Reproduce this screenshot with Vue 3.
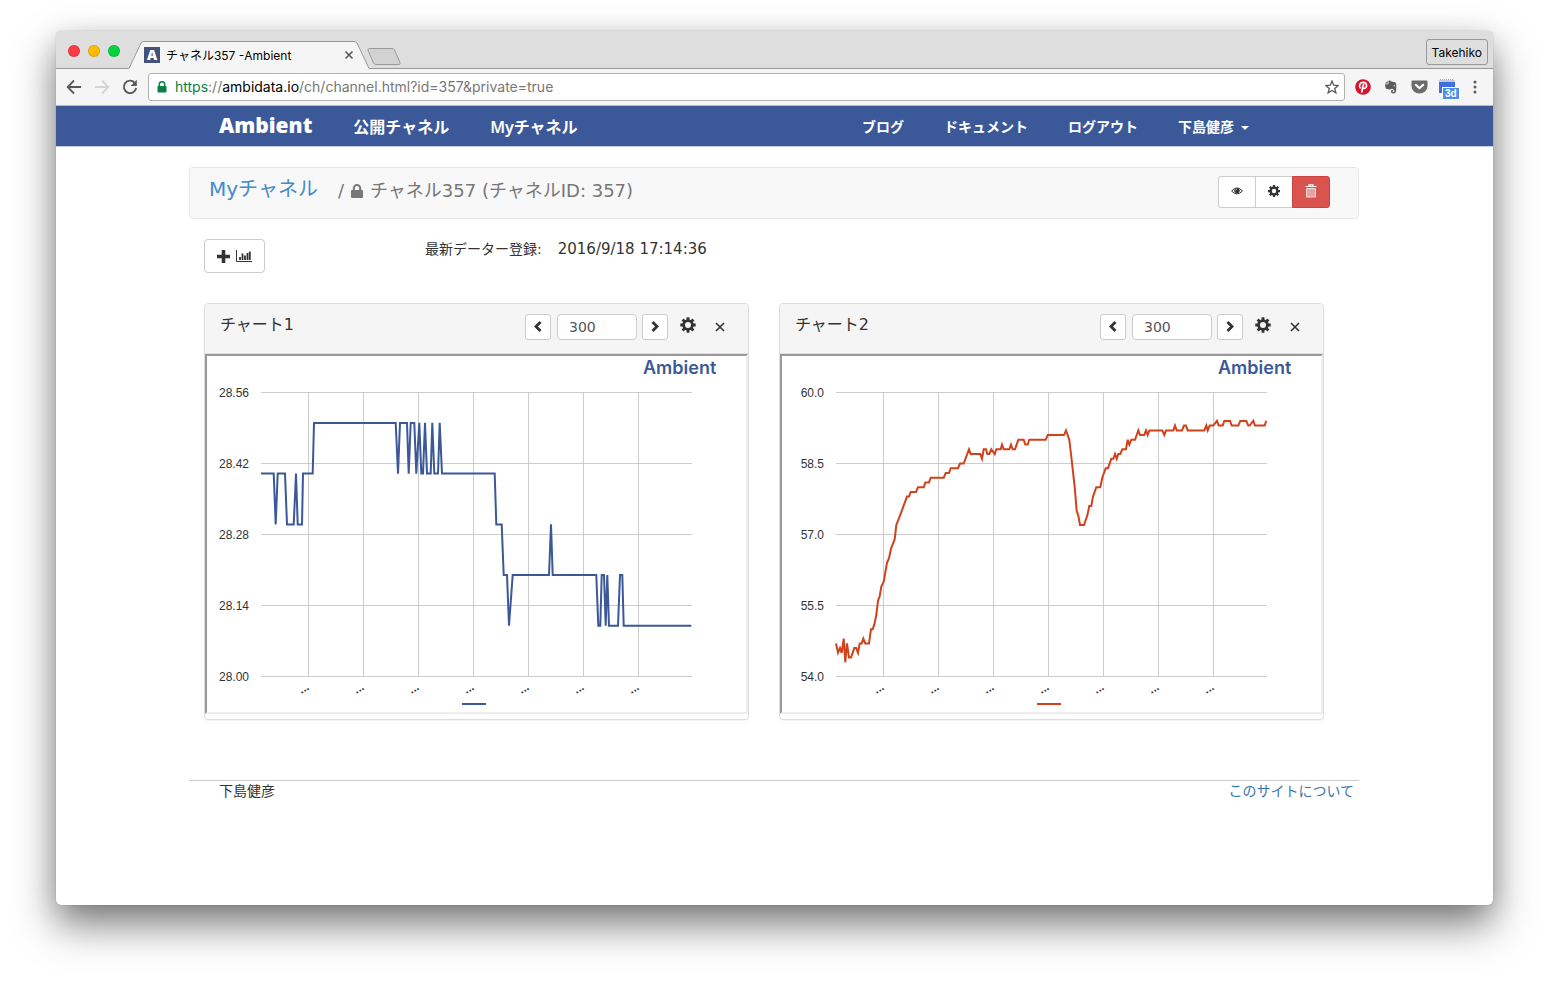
<script setup>
import { ref } from 'vue'

const T_START = 184
const T_SCALE = 3
const PLOT = { left: 54, right: 485, top: 36.5, step: 71 }
const gridX = [102, 157, 212, 267, 322, 377, 432]

const temperature = [
  [184, 28.4], [222, 28.4], [228, 28.3], [234, 28.4], [256, 28.4], [262, 28.3], [282, 28.3], [289, 28.4],
  [294, 28.3], [307, 28.3], [310, 28.4], [339, 28.4], [343, 28.5], [588, 28.5], [595, 28.4], [601, 28.5],
  [622, 28.5], [627, 28.4], [633, 28.5], [644, 28.5], [650, 28.4], [659, 28.5], [665, 28.4], [670, 28.4],
  [676, 28.5], [682, 28.4], [693, 28.4], [698, 28.5], [704, 28.4], [715, 28.4], [720, 28.5], [727, 28.4],
  [885, 28.4], [890, 28.3], [906, 28.3], [912, 28.2], [922, 28.2], [928, 28.1], [939, 28.2], [1048, 28.2],
  [1054, 28.3], [1059, 28.2], [1190, 28.2], [1196, 28.1], [1202, 28.1], [1206, 28.2], [1213, 28.2], [1218, 28.1],
  [1223, 28.2], [1228, 28.1], [1255, 28.1], [1261, 28.2], [1268, 28.2], [1272, 28.1], [1475, 28.1]
]

const humidity = [
  [184, 54.7], [190, 54.5], [196, 54.6], [201, 54.5], [207, 54.8], [212, 54.3], [217, 54.7], [223, 54.4],
  [229, 54.4], [239, 54.6], [245, 54.6], [250, 54.5], [255, 54.7], [261, 54.7], [266, 54.8], [272, 54.7],
  [283, 54.7], [289, 55.0], [294, 55.0], [299, 55.1], [305, 55.3], [310, 55.6], [315, 55.7], [320, 55.9],
  [327, 56.0], [332, 56.2], [337, 56.4], [343, 56.5], [349, 56.7], [360, 56.9], [365, 57.2], [376, 57.4],
  [397, 57.8], [403, 57.8], [408, 57.9], [424, 57.9], [430, 58.0], [447, 58.0], [452, 58.1], [463, 58.1],
  [468, 58.2], [507, 58.2], [513, 58.3], [523, 58.3], [528, 58.4], [550, 58.4], [556, 58.5], [567, 58.5],
  [583, 58.8], [588, 58.7], [617, 58.7], [622, 58.6], [627, 58.8], [634, 58.8], [638, 58.7], [644, 58.7],
  [650, 58.8], [660, 58.7], [665, 58.8], [678, 58.8], [682, 58.9], [687, 58.8], [704, 58.8], [709, 58.9],
  [714, 58.8], [721, 58.8], [731, 59.0], [747, 59.0], [752, 58.9], [759, 58.9], [764, 59.0], [813, 59.0],
  [819, 59.1], [868, 59.1], [874, 59.2], [879, 59.1], [884, 59.0], [889, 58.7], [900, 58.0], [906, 57.5],
  [911, 57.4], [916, 57.2], [928, 57.2], [938, 57.4], [944, 57.6], [950, 57.6], [955, 57.8], [965, 58.0],
  [977, 58.0], [983, 58.2], [993, 58.4], [1000, 58.4], [1010, 58.6], [1016, 58.6], [1021, 58.7], [1026, 58.6],
  [1031, 58.7], [1037, 58.7], [1043, 58.8], [1054, 58.8], [1059, 59.0], [1064, 58.9], [1070, 59.0], [1081, 59.0],
  [1091, 59.2], [1096, 59.1], [1109, 59.1], [1114, 59.2], [1119, 59.1], [1124, 59.2], [1163, 59.2], [1169, 59.1],
  [1174, 59.2], [1196, 59.2], [1201, 59.3], [1206, 59.2], [1222, 59.2], [1228, 59.3], [1234, 59.3], [1239, 59.2],
  [1289, 59.2], [1295, 59.3], [1299, 59.2], [1305, 59.3], [1316, 59.3], [1327, 59.4], [1332, 59.3], [1344, 59.3],
  [1349, 59.4], [1366, 59.4], [1371, 59.3], [1391, 59.3], [1397, 59.4], [1415, 59.4], [1421, 59.3], [1425, 59.3],
  [1436, 59.4], [1441, 59.3], [1470, 59.3], [1475, 59.4]
]

const charts = ref([
  { id: 'c1', title: 'チャート1', count: '300', color: '#3b5998', labels: ['28.56', '28.42', '28.28', '28.14', '28.00'], top: 28.56, bottom: 28.0, data: temperature },
  { id: 'c2', title: 'チャート2', count: '300', color: '#d0421b', labels: ['60.0', '58.5', '57.0', '55.5', '54.0'], top: 60, bottom: 54, data: humidity }
])

function polyline(c) {
  const height = PLOT.step * 4
  return c.data
    .map(([t, v]) => {
      const x = PLOT.left + (t - T_START) / T_SCALE
      const y = PLOT.top + ((c.top - v) / (c.top - c.bottom)) * height
      return x.toFixed(1) + ',' + y.toFixed(1)
    })
    .join(' ')
}

const url = ref('https://ambidata.io/ch/channel.html?id=357&private=true')
</script>

<template>
  <div class="desktop">
    <div class="window">
      <div class="titlebar">
        <div class="lights">
          <button class="light red" aria-label="閉じる"></button>
          <button class="light yellow" aria-label="しまう"></button>
          <button class="light green" aria-label="拡大"></button>
        </div>
        <div class="tab">
          <svg class="tab-shape" viewBox="0 0 242 28" preserveAspectRatio="none" aria-hidden="true">
            <path d="M0 27.500 L1 27.500 L13 2 Q14 .5 16 .5 L226 .5 Q228 .5 229 2 L241 27.500 L242 27.500 L242 29 L0 29Z" fill="#f5f5f5" />
            <path d="M0 27.500 L1 27.500 L13 2 Q14 .5 16 .5 L226 .5 Q228 .5 229 2 L241 27.500 L242 27.500" fill="none" stroke="#999" />
          </svg>
          <span class="favicon">A</span>
          <span class="tab-title">チャネル357 -Ambient</span>
          <button class="tab-close" aria-label="タブを閉じる">
            <svg width="10" height="10" viewBox="0 0 10 10"><path d="M1.500 1.500l7 7M8.500 1.500l-7 7" stroke="#555" stroke-width="1.500" /></svg>
          </button>
        </div>
        <button class="new-tab" aria-label="新しいタブ">
          <svg width="34" height="17" viewBox="0 0 34 17"><path d="M2.500 .5H25Q26.500 .5 27.500 2L33 14.500Q33.500 16.500 32 16.500H9Q7.500 16.500 6.500 15L1 2.500Q.5 .5 2.500 .5Z" fill="#d2d2d2" stroke="#9a9a9a" /></svg>
        </button>
        <button class="user">Takehiko</button>
      </div>

      <div class="toolbar">
        <button class="tool" aria-label="戻る">
          <svg width="16" height="16" viewBox="0 0 16 16"><path d="M15 8H2M8 1.500L1.700 8L8 14.500" fill="none" stroke="#5a5a5a" stroke-width="1.800" /></svg>
        </button>
        <button class="tool" aria-label="進む">
          <svg width="16" height="16" viewBox="0 0 16 16"><path d="M1 8H14M8 1.500L14.300 8L8 14.500" fill="none" stroke="#d4d4d4" stroke-width="1.800" /></svg>
        </button>
        <button class="tool" aria-label="再読み込み">
          <svg width="16" height="16" viewBox="0 0 16 16"><path d="M12.800 3.800A6.200 6.200 0 1 0 14.200 9" fill="none" stroke="#5a5a5a" stroke-width="1.900" /><path d="M14.800 .8V7H8.600Z" fill="#5a5a5a" /></svg>
        </button>
        <div class="address">
          <svg width="10" height="12" viewBox="0 0 10 12"><path d="M2.300 5.500V3.500a2.700 2.700 0 0 1 5.400 0v2" fill="none" stroke="#0b8043" stroke-width="1.500" /><rect x=".5" y="5" width="9" height="6.500" rx=".8" fill="#0b8043" /></svg>
          <a class="url" :href="url"><span class="secure">https</span>://<span class="host">ambidata.io</span>/ch/channel.html?id=357&amp;private=true</a>
          <button class="star" aria-label="ブックマーク">
            <svg width="14" height="14" viewBox="0 0 14 14"><path d="M7 1L8.700 5.200L13.200 5.500L9.700 8.400L10.900 12.900L7 10.400L3.100 12.900L4.300 8.400L.8 5.500L5.300 5.200Z" fill="none" stroke="#5a5a5a" stroke-width="1.300" /></svg>
          </button>
        </div>
        <div class="extensions">
          <button aria-label="Pinterest">
            <svg width="16" height="16" viewBox="0 0 16 16"><circle cx="8" cy="8" r="7.800" fill="#d8132c" /><path d="M5.200 8.900C3.500 6.300 5.200 3.300 8.300 3.300C12.700 3.300 12.300 9.500 9 9.500C7.700 9.500 7.500 8.600 7.500 8.600M8.500 5.500L6.700 13" fill="none" stroke="#fff" stroke-width="1.700" stroke-linecap="round" /></svg>
          </button>
          <button aria-label="Evernote">
            <svg width="14" height="14" viewBox="0 0 14 14"><path d="M4.500 .8C6 .3 7 .8 7.400 1.600L11 2.200C12.400 2.500 12.600 6 12.200 9.500C12 12.500 11 13.500 9.500 13.500C7.500 13.500 7 12.800 7 11.500C7 10.300 8 9.900 9 10.100V11.300C8.200 11.200 8.200 12 9 12.100C10 12.200 10.500 11.500 10.300 10.500C10 9.500 8.500 9.300 8 8.500C7 10 3 9.500 2 8.500C1.200 7.500 1 5.500 1.200 4.300H4.500Z" fill="#5c5c5c" /><path d="M1 3.400L3.700 .9V3.400Z" fill="#5c5c5c" /><circle cx="10.300" cy="5.800" r=".8" fill="#ddd" /></svg>
          </button>
          <button aria-label="Pocket">
            <svg width="17" height="14" viewBox="0 0 17 14"><path d="M1.500 .5H15.500Q16.500 .5 16.500 1.500V6A8 7.500 0 0 1 .5 6V1.500Q.5 .5 1.500 .5Z" fill="#6b6b6b" /><path d="M4.800 4.800L8.500 8.200L12.200 4.800" fill="none" stroke="#fff" stroke-width="2.200" stroke-linecap="round" stroke-linejoin="round" /></svg>
          </button>
          <button class="calendar" aria-label="カレンダー">
            <svg width="17" height="16" viewBox="0 0 17 16"><rect x="0" y="2" width="16" height="12" fill="#3f6fd8" /><rect x="0" y="1" width="16" height="2" fill="#c3cbdc" /><path d="M1 .5H15" stroke="#aaa" stroke-dasharray="1 1" /></svg>
            <span class="badge">3d</span>
          </button>
          <button aria-label="メニュー">
            <svg width="4" height="14" viewBox="0 0 4 14" fill="#5a5a5a"><circle cx="2" cy="2" r="1.500" /><circle cx="2" cy="7" r="1.500" /><circle cx="2" cy="12" r="1.500" /></svg>
          </button>
        </div>
      </div>

      <nav class="navbar">
        <div class="container nav-row">
          <a class="brand" href="#">Ambient</a>
          <a class="nav-main" href="#">公開チャネル</a>
          <a class="nav-main" href="#">Myチャネル</a>
          <div class="nav-right">
            <a href="#">ブログ</a>
            <a href="#">ドキュメント</a>
            <a href="#">ログアウト</a>
            <a href="#" class="account">下島健彦 <span class="caret"></span></a>
          </div>
        </div>
      </nav>

      <main class="site">
        <div class="container">
          <header class="well">
            <a class="crumb" href="#">Myチャネル</a>
            <h1 class="channel">
              <span>/</span>
              <svg width="12" height="14" viewBox="0 0 12 14"><path d="M2.800 7V4.200a3.200 3.200 0 0 1 6.400 0V7" fill="none" stroke="#777" stroke-width="2" /><rect x="0" y="6" width="12" height="8" rx="1" fill="#777" /></svg>
              <span>チャネル357 (チャネルID: 357)</span>
            </h1>
            <div class="group">
              <button aria-label="表示">
                <svg width="12" height="10" viewBox="0 0 12 10"><path d="M.6 5Q6 -1.200 11.400 5Q6 10.800 .6 5Z" fill="none" stroke="#333" stroke-width="1" /><circle cx="6" cy="4.600" r="2.700" fill="#333" /><path d="M4.600 4.300Q4.700 3.200 5.800 3" stroke="#fff" stroke-width=".8" fill="none" /></svg>
              </button>
              <button aria-label="設定">
                <svg width="12" height="12" viewBox="0 0 16 16"><circle cx="8" cy="8" r="4.500" fill="none" stroke="#333" stroke-width="3.200" /><path d="M8 0V3M8 13V16M0 8H3M13 8H16M2.300 2.300L4.500 4.500M11.500 11.500L13.700 13.700M2.300 13.700L4.500 11.500M11.500 4.500L13.700 2.300" stroke="#333" stroke-width="3" /></svg>
              </button>
              <button class="danger" aria-label="削除">
                <svg width="12" height="14" viewBox="0 0 12 14"><path d="M.5 2.500H11.500M4 2V.8H8V2" fill="none" stroke="#fff" stroke-width="1.200" /><path d="M1.500 4.500H10.500V13H1.500Z" fill="#e9a3a1" stroke="#f6d9d8" /></svg>
              </button>
            </div>
          </header>

          <div class="status">
            <button class="add" aria-label="チャート追加">
              <svg width="13" height="13" viewBox="0 0 13 13"><path d="M6.500 0V13M0 6.500H13" stroke="#333" stroke-width="3.600" /></svg>
              <svg width="16" height="12" viewBox="0 0 16 12"><path d="M.5 0V11.500H16" fill="none" stroke="#333" /><path d="M4 10V7M6.500 10V3.500M9 10V5.500M11.500 10V3M13.800 10V1.500" stroke="#333" stroke-width="1.800" /></svg>
            </button>
            <p class="latest"><span>最新データー登録:</span><time>2016/9/18 17:14:36</time></p>
          </div>

          <div class="panels">
            <section v-for="c in charts" :key="c.id" class="panel">
              <div class="panel-head">
                <h2>{{ c.title }}</h2>
                <button class="step" aria-label="前へ">
                  <svg width="8" height="11" viewBox="0 0 8 11"><path d="M6.500 1L2 5.500L6.500 10" fill="none" stroke="#333" stroke-width="2.800" /></svg>
                </button>
                <input v-model="c.count" type="text" :aria-label="c.title + ' 件数'" />
                <button class="step" aria-label="次へ">
                  <svg width="8" height="11" viewBox="0 0 8 11"><path d="M1.500 1L6 5.500L1.500 10" fill="none" stroke="#333" stroke-width="2.800" /></svg>
                </button>
                <button class="plain gear" aria-label="設定">
                  <svg width="16" height="16" viewBox="0 0 16 16"><circle cx="8" cy="8" r="4.400" fill="none" stroke="#333" stroke-width="2.800" /><path d="M8 .3V3M8 13V15.700M.3 8H3M13 8H15.700M2.600 2.600L4.500 4.500M11.500 11.500L13.400 13.400M2.600 13.400L4.500 11.500M11.500 4.500L13.400 2.600" stroke="#333" stroke-width="2.800" /></svg>
                </button>
                <button class="plain" aria-label="閉じる">
                  <svg width="10" height="10" viewBox="0 0 10 10"><path d="M1 1L9 9M9 1L1 9" stroke="#333" stroke-width="1.600" /></svg>
                </button>
              </div>
              <div class="frame">
                <svg class="chart" viewBox="0 0 539 356" role="img" :aria-label="c.title">
                  <text x="436" y="18" class="mark">Ambient</text>
                  <g stroke="#ccc" shape-rendering="crispEdges">
                    <path v-for="(l, i) in c.labels" :key="'h' + l" :d="`M${PLOT.left} ${PLOT.top + i * PLOT.step}H${PLOT.right}`" />
                    <path v-for="x in gridX" :key="'v' + x" :d="`M${x - 0.5} ${PLOT.top}V${PLOT.top + PLOT.step * 4}`" />
                  </g>
                  <text v-for="(l, i) in c.labels" :key="l" x="42" :y="41 + i * PLOT.step" text-anchor="end" class="tick">{{ l }}</text>
                  <text v-for="x in gridX" :key="'t' + x" :transform="`translate(${x + 1} 333) rotate(-30)`" text-anchor="end" class="tick dots">...</text>
                  <polyline :points="polyline(c)" fill="none" :stroke="c.color" stroke-width="2" />
                  <path d="M255 348H279" :stroke="c.color" stroke-width="2" />
                </svg>
              </div>
            </section>
          </div>

          <footer class="foot">
            <span>下島健彦</span>
            <a href="#">このサイトについて</a>
          </footer>
        </div>
      </main>
    </div>
  </div>
</template>

<style>
body {
  margin: 0;
  background: #fff;
}
</style>

<style scoped>
* {
  box-sizing: border-box;
}
.desktop {
  min-height: 100vh;
  padding: 31px 56px 80px;
  display: flex;
  font-family: "DejaVu Sans", "Noto Sans CJK JP", sans-serif;
  font-size: 14px;
  color: #333;
  overflow: hidden;
}
.window {
  flex: 1;
  min-width: 0;
  display: flex;
  flex-direction: column;
  background: #fff;
  border-radius: 5px;
  box-shadow: 0 0 1px rgba(0, 0, 0, 0.4), 0 20px 40px rgba(0, 0, 0, 0.5), 0 4px 24px rgba(0, 0, 0, 0.1);
}
button {
  padding: 0;
  border: 0;
  background: none;
  font: inherit;
  color: inherit;
  display: flex;
  align-items: center;
  justify-content: center;
}
a {
  text-decoration: none;
}
svg {
  display: block;
  flex: none;
}
.titlebar {
  height: 38px;
  display: flex;
  align-items: flex-end;
  background: #dedede;
  border-radius: 5px 5px 0 0;
  box-shadow: inset 0 -1px #999;
  font-family: Inter, "Noto Sans CJK JP", sans-serif;
  font-size: 12px;
  color: #000;
}
.lights {
  display: flex;
  gap: 8px;
  padding: 2px 0 0 12px;
  align-self: center;
}
.light {
  width: 12px;
  height: 12px;
  border-radius: 50%;
  border: 1px solid rgba(0, 0, 0, 0.12);
}
.red {
  background: #fc3b46;
}
.yellow {
  background: #fdbc04;
}
.green {
  background: #05d33f;
}
.tab {
  position: relative;
  width: 242px;
  height: 28px;
  margin-left: 8px;
  padding: 0 16px;
  display: flex;
  align-items: center;
}
.tab-shape {
  position: absolute;
  inset: 0;
  width: 100%;
  height: 100%;
}
.favicon {
  position: relative;
  width: 16px;
  height: 16px;
  background: #43527a;
  color: #fff;
  font: 800 14px/16px "Open Sans", sans-serif;
  text-align: center;
}
.tab-title {
  position: relative;
  flex: 1;
  margin-left: 6px;
  padding-bottom: 2px;
  white-space: nowrap;
}
.tab-close {
  position: relative;
}
.new-tab {
  margin: 0 auto 4px -3px;
}
.user {
  height: 26px;
  padding: 0 5px;
  margin: 0 5px 4px 0;
  border: 1px solid #999;
  border-radius: 3px;
}
.toolbar {
  height: 37px;
  display: flex;
  align-items: center;
  gap: 12px;
  padding: 0 16px 0 10px;
  background: #f5f5f5;
  border-bottom: 1px solid #bbb;
}
.address {
  flex: 1;
  height: 28px;
  margin-left: -2px;
  padding: 0 5px 0 8px;
  display: flex;
  align-items: center;
  background: #fff;
  border: 1px solid #b2b2b2;
  border-radius: 3px;
}
.url {
  flex: 1;
  margin-left: 8px;
  font: 14px/20px Inter, sans-serif;
  color: #777;
}
.secure {
  color: #0b8043;
}
.host {
  color: #000;
}
.extensions {
  display: flex;
  align-items: center;
  gap: 13px;
  margin-left: -2px;
}
.calendar {
  position: relative;
  margin: 0 4px 0 -2px;
}
.badge {
  position: absolute;
  left: 3px;
  top: 8px;
  padding: 0 2px;
  background: #4d8df0;
  border: 1px solid #fff;
  color: #fff;
  font: 700 10px/11px "Liberation Sans", sans-serif;
}
.container {
  width: 100%;
  max-width: 1170px;
  margin: 0 auto;
}
.navbar {
  padding-right: 1px;
  background: #3b5998;
  border-bottom: 1px solid #c5cde0;
}
.nav-row {
  height: 40px;
  padding: 0 110px 0 30px;
  display: flex;
  align-items: center;
  gap: 41px;
}
.nav-row a {
  color: #fff;
  font-family: "Noto Sans", "Noto Sans CJK JP", sans-serif;
  font-weight: 600;
  white-space: nowrap;
}
.nav-row .brand {
  padding-bottom: 2px;
  font: 800 21px/28px "Open Sans", sans-serif;
}
.nav-main {
  font-size: 16px;
}
.nav-right {
  margin-left: auto;
  display: flex;
  gap: 40px;
}
.account {
  display: flex;
  align-items: center;
  gap: 7px;
}
.caret {
  margin-top: 3px;
  border: 4px solid transparent;
  border-top-color: #fff;
  border-bottom: 0;
}
.site {
  flex: 1;
  padding: 20px 1px 0 0;
}
.well {
  height: 52px;
  padding: 0 28px 0 19px;
  display: flex;
  align-items: center;
  background: #f8f8f8;
  border: 1px solid #e7e7e7;
  border-radius: 4px;
}
.crumb {
  padding-bottom: 8px;
  font-size: 20px;
  line-height: 28px;
  color: #428bca;
}
.channel {
  margin: 0 auto 4px 20px;
  display: flex;
  align-items: center;
  gap: 7px;
  font-size: 18px;
  font-weight: 400;
  line-height: 24px;
  color: #777;
}
.group {
  display: flex;
  margin-bottom: 3px;
}
.group button {
  width: 38px;
  height: 32px;
  padding-bottom: 1px;
  background: #fff;
  border: 1px solid #ccc;
}
.group button + button {
  margin-left: -1px;
}
.group button:first-child {
  border-radius: 3px 0 0 3px;
}
.group .danger {
  background: #d9534f;
  border-color: #c9433f;
  border-radius: 0 3px 3px 0;
}
.status {
  display: flex;
  align-items: flex-start;
  margin: 20px 15px 30px;
}
.add {
  width: 61px;
  height: 34px;
  gap: 6px;
  background: #fff;
  border: 1px solid #ccc;
  border-radius: 4px;
}
.latest {
  margin: 0 0 0 160px;
  display: flex;
  gap: 16px;
  line-height: 20px;
}
.latest time {
  font-size: 15px;
}
.panels {
  display: grid;
  grid-template-columns: 1fr 1fr;
  gap: 30px;
  padding: 0 35px 0 15px;
}
.panel {
  padding-bottom: 5px;
  border: 1px solid #ddd;
  border-radius: 4px;
  box-shadow: 0 1px 1px rgba(0, 0, 0, 0.05);
}
.panel-head {
  height: 50px;
  padding: 0 23px 4px 15px;
  display: flex;
  align-items: center;
  background: #f5f5f5;
  border-bottom: 1px solid #ddd;
  border-radius: 3px 3px 0 0;
}
.panel-head h2 {
  margin: 0 auto 3px 0;
  font-size: 16px;
  font-weight: 400;
  line-height: 24px;
}
.step {
  width: 26px;
  height: 26px;
  background: #fff;
  border: 1px solid #ccc;
  border-radius: 3px;
}
.panel-head input {
  width: 80px;
  height: 26px;
  margin: 0 5px 0 6px;
  padding: 0 11px;
  border: 1px solid #ccc;
  border-radius: 4px;
  background: #fff;
  color: #555;
  font: 14px/20px "DejaVu Sans", sans-serif;
}
.gear {
  margin: 0 19px 4px 12px;
}
.frame {
  border: 2px solid;
  border-color: #999 #eee #eee #999;
}
.chart {
  width: 100%;
}
.tick {
  font: 12px "Liberation Sans", sans-serif;
  fill: #333;
}
.dots {
  font-weight: 700;
}
.mark {
  font: 600 18px Inter, sans-serif;
  fill: #3b5998;
}
.foot {
  margin-top: 60px;
  padding: 0 5px 0 30px;
  display: flex;
  justify-content: space-between;
  border-top: 1px solid #ccc;
  line-height: 20px;
}
.foot a {
  color: #3b73af;
}
</style>
